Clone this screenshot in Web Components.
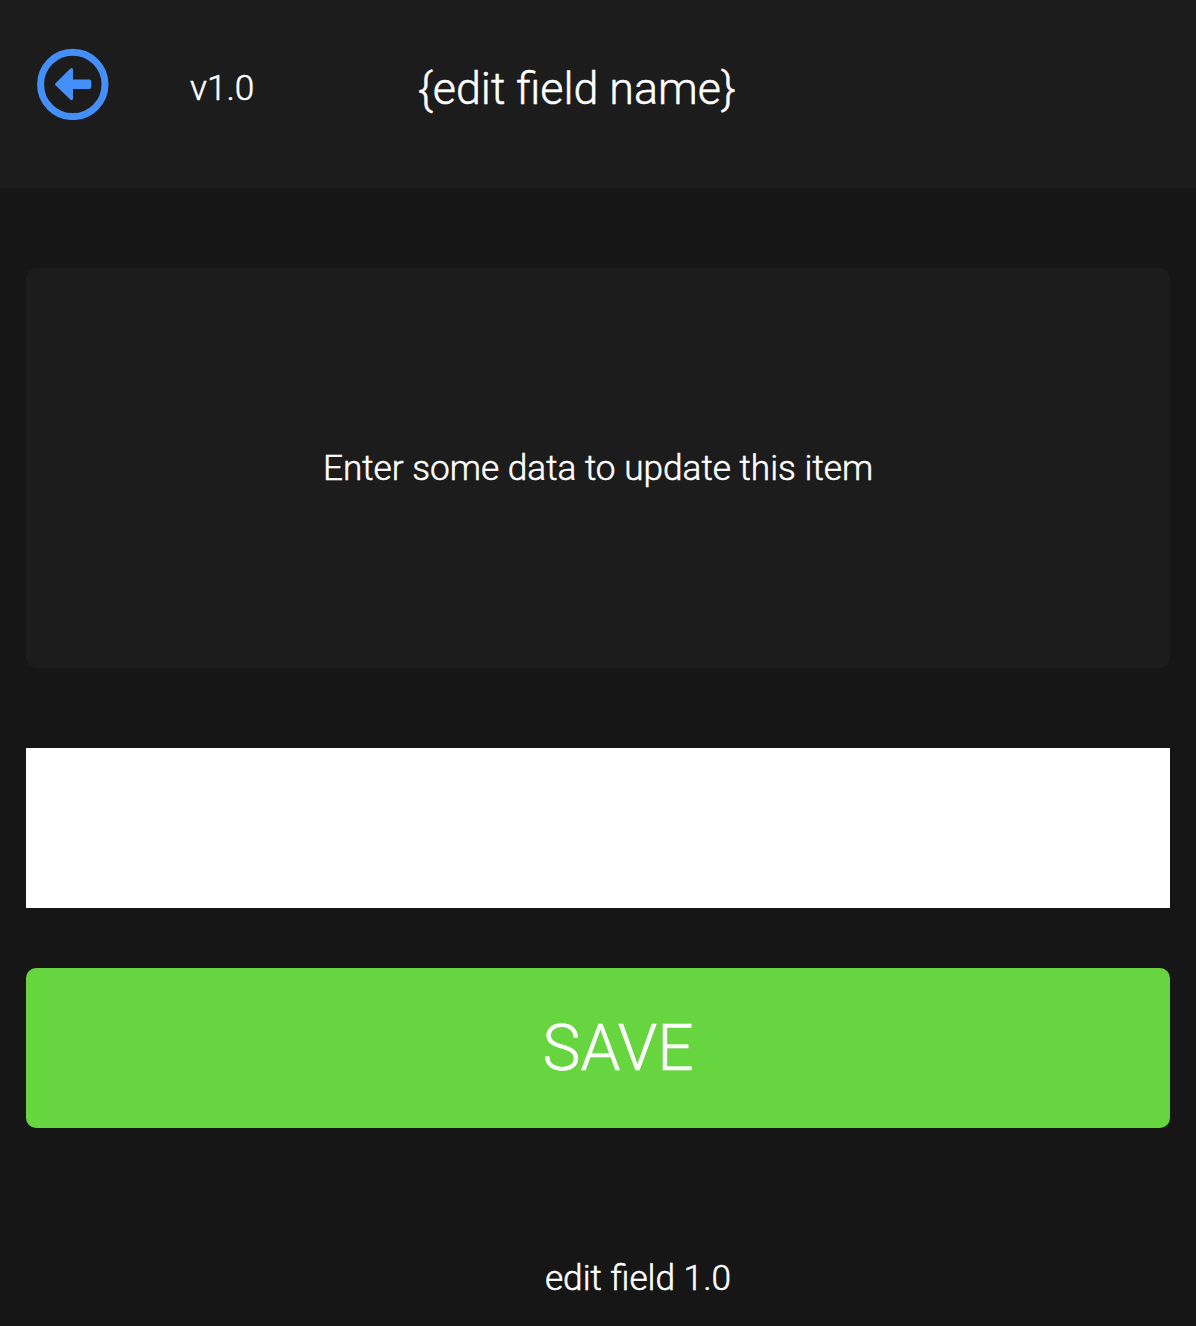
<!DOCTYPE html>
<html lang="en"><head><meta charset="utf-8"><title>Edit field</title>
<style>body{margin:0;background:#161616}</style></head><body>
<edit-page></edit-page>
<script>
const define=(name,html)=>customElements.define(name,class extends HTMLElement{
 constructor(){super();this.attachShadow({mode:'open'}).innerHTML=html;}
});
define('back-icon',`<style>:host{display:block;width:72px;height:72px}svg{display:block}</style>
<svg width="72" height="72" viewBox="0 0 72 72"><g transform="translate(-.2)"><circle cx="36" cy="36.4" r="32.2" fill="none" stroke="#448ff8" stroke-width="7"/><path d="M18.7 35.2 33.4 20.8Q36.2 18.5 36.2 22V31.5H52.5Q54.5 31.5 54.5 33.5V39Q54.5 41 52.5 41H36.2V50.2Q36.2 53.7 33.4 51.4L18.7 37.2Q17.7 36.2 18.7 35.2Z" fill="#448ff8"/></g></svg>`);
define('app-header',`<style>:host{display:flex;height:188px;box-sizing:border-box;background:#1c1c1c;padding:48px 0 0 37px;align-items:flex-start}
.v{margin:20px 0 0 81px;width:228px;font-size:35.2px;line-height:40px}.t{margin-top:15px;font-size:44.8px;line-height:52px;white-space:nowrap}</style>
<back-icon></back-icon><div class="v"><slot name="version"></slot></div><div class="t"><slot></slot></div>`);
define('message-card',`<style>:host{display:flex;height:400px;border-radius:10px;background:#1c1c1c;align-items:center;justify-content:center;font-size:35.2px}</style><span><slot></slot></span>`);
define('text-field',`<style>:host{display:block;height:160px;margin-top:80px}input{display:block;width:100%;height:100%;border:0;padding:0 20px;box-sizing:border-box;background:#fff;border-radius:0;font:36px Roboto,sans-serif}</style><input aria-label="Field value">`);
define('save-button',`<style>:host{display:block;height:160px;margin-top:60px}button{width:100%;height:100%;border:0;border-radius:10px;background:#66d540;color:#fff;font:300 64px Roboto,sans-serif;padding:0 0 0 40px;-webkit-text-stroke:.5px #fff}</style><button><slot></slot></button>`);
define('app-footer',`<style>:host{display:block;margin-top:128px;padding-left:80px;text-align:center;font-size:35.2px;line-height:44px}</style><slot></slot>`);
define('edit-page',`<style>:host{display:block;box-sizing:border-box;height:1326px;background:#161616;color:#fff;font:300 35.2px Roboto,sans-serif;-webkit-text-stroke:.5px #fff}main{padding:80px 26px 0}</style>
<app-header><span slot="version">v1.0</span>{edit field name}</app-header><main><message-card>Enter some data to update this item</message-card><text-field></text-field><save-button>SAVE</save-button><app-footer>edit field 1.0</app-footer></main>`);
</script></body></html>
